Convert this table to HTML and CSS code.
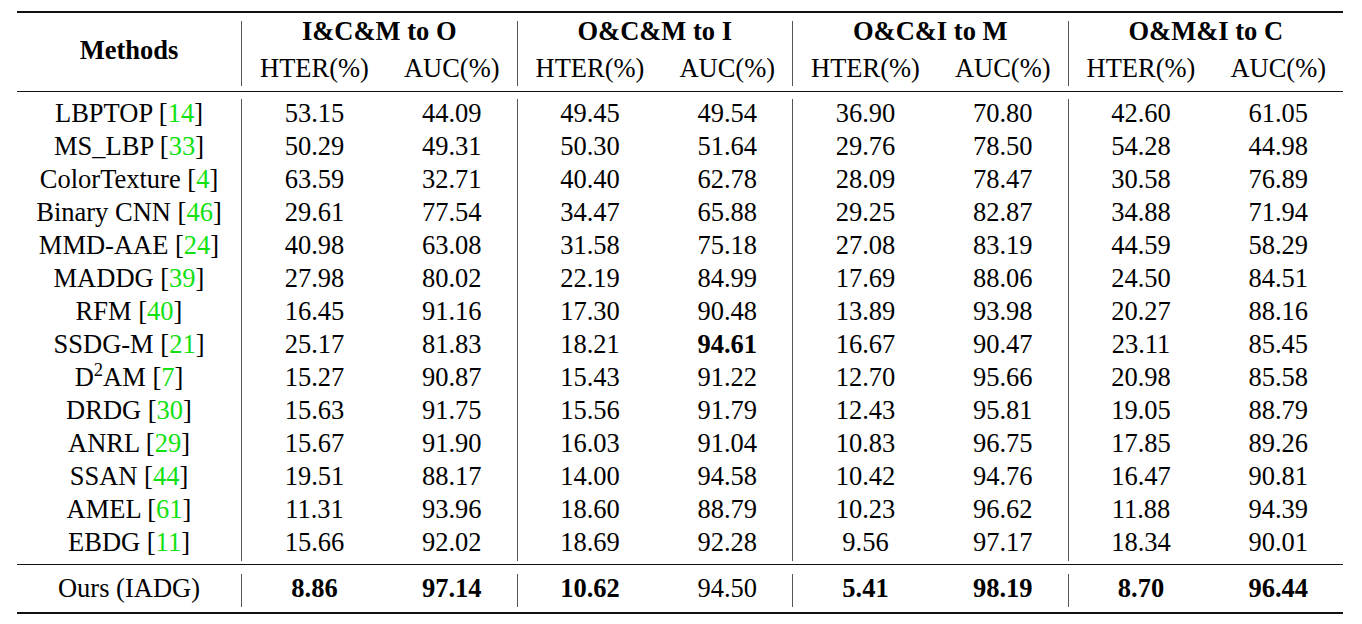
FILE: index.html
```html
<!DOCTYPE html>
<html lang="en">
<head>
<meta charset="utf-8">
<title>Cross-domain results</title>
<link rel="stylesheet" href="styles.css">
</head>
<body>
<div class="page">
<table class="results">
<colgroup>
<col class="c-method">
<col class="c-hter"><col class="c-auc">
<col class="c-hter"><col class="c-auc">
<col class="c-hter"><col class="c-auc">
<col class="c-hter"><col class="c-auc">
</colgroup>
<thead>
<tr class="gap gap-top"><td colspan="9"></td></tr>
<tr class="head-1">
<th rowspan="2" class="methods">Methods</th>
<th colspan="2" class="group vl">I&amp;C&amp;M to O</th>
<th colspan="2" class="group vl">O&amp;C&amp;M to I</th>
<th colspan="2" class="group vl">O&amp;C&amp;I to M</th>
<th colspan="2" class="group vl">O&amp;M&amp;I to C</th>
</tr>
<tr class="head-2">
<th class="vl">HTER(%)</th><th>AUC(%)</th>
<th class="vl">HTER(%)</th><th>AUC(%)</th>
<th class="vl">HTER(%)</th><th>AUC(%)</th>
<th class="vl">HTER(%)</th><th>AUC(%)</th>
</tr>
<tr class="gap gap-mid-a"><td colspan="9"></td></tr>
<tr class="gap gap-mid-b"><td colspan="9"></td></tr>
</thead>
<tbody class="data">
<tr><td>LBPTOP [<span class="cite">14</span>]</td><td class="vl">53.15</td><td>44.09</td><td class="vl">49.45</td><td>49.54</td><td class="vl">36.90</td><td>70.80</td><td class="vl">42.60</td><td>61.05</td></tr>
<tr><td>MS_LBP [<span class="cite">33</span>]</td><td class="vl">50.29</td><td>49.31</td><td class="vl">50.30</td><td>51.64</td><td class="vl">29.76</td><td>78.50</td><td class="vl">54.28</td><td>44.98</td></tr>
<tr><td>ColorTexture [<span class="cite">4</span>]</td><td class="vl">63.59</td><td>32.71</td><td class="vl">40.40</td><td>62.78</td><td class="vl">28.09</td><td>78.47</td><td class="vl">30.58</td><td>76.89</td></tr>
<tr><td>Binary CNN [<span class="cite">46</span>]</td><td class="vl">29.61</td><td>77.54</td><td class="vl">34.47</td><td>65.88</td><td class="vl">29.25</td><td>82.87</td><td class="vl">34.88</td><td>71.94</td></tr>
<tr><td>MMD-AAE [<span class="cite">24</span>]</td><td class="vl">40.98</td><td>63.08</td><td class="vl">31.58</td><td>75.18</td><td class="vl">27.08</td><td>83.19</td><td class="vl">44.59</td><td>58.29</td></tr>
<tr><td>MADDG [<span class="cite">39</span>]</td><td class="vl">27.98</td><td>80.02</td><td class="vl">22.19</td><td>84.99</td><td class="vl">17.69</td><td>88.06</td><td class="vl">24.50</td><td>84.51</td></tr>
<tr><td>RFM [<span class="cite">40</span>]</td><td class="vl">16.45</td><td>91.16</td><td class="vl">17.30</td><td>90.48</td><td class="vl">13.89</td><td>93.98</td><td class="vl">20.27</td><td>88.16</td></tr>
<tr><td>SSDG-M [<span class="cite">21</span>]</td><td class="vl">25.17</td><td>81.83</td><td class="vl">18.21</td><td class="best">94.61</td><td class="vl">16.67</td><td>90.47</td><td class="vl">23.11</td><td>85.45</td></tr>
<tr><td>D<sup>2</sup>AM [<span class="cite">7</span>]</td><td class="vl">15.27</td><td>90.87</td><td class="vl">15.43</td><td>91.22</td><td class="vl">12.70</td><td>95.66</td><td class="vl">20.98</td><td>85.58</td></tr>
<tr><td>DRDG [<span class="cite">30</span>]</td><td class="vl">15.63</td><td>91.75</td><td class="vl">15.56</td><td>91.79</td><td class="vl">12.43</td><td>95.81</td><td class="vl">19.05</td><td>88.79</td></tr>
<tr><td>ANRL [<span class="cite">29</span>]</td><td class="vl">15.67</td><td>91.90</td><td class="vl">16.03</td><td>91.04</td><td class="vl">10.83</td><td>96.75</td><td class="vl">17.85</td><td>89.26</td></tr>
<tr><td>SSAN [<span class="cite">44</span>]</td><td class="vl">19.51</td><td>88.17</td><td class="vl">14.00</td><td>94.58</td><td class="vl">10.42</td><td>94.76</td><td class="vl">16.47</td><td>90.81</td></tr>
<tr><td>AMEL [<span class="cite">61</span>]</td><td class="vl">11.31</td><td>93.96</td><td class="vl">18.60</td><td>88.79</td><td class="vl">10.23</td><td>96.62</td><td class="vl">11.88</td><td>94.39</td></tr>
<tr><td>EBDG [<span class="cite">11</span>]</td><td class="vl">15.66</td><td>92.02</td><td class="vl">18.69</td><td>92.28</td><td class="vl">9.56</td><td>97.17</td><td class="vl">18.34</td><td>90.01</td></tr>
</tbody>
<tbody class="ours">
<tr class="gap gap-ours-a"><td colspan="9"></td></tr>
<tr class="gap gap-ours-b"><td colspan="9"></td></tr>
<tr class="ours-row"><td>Ours (IADG)</td><td class="vl best">8.86</td><td class="best">97.14</td><td class="vl best">10.62</td><td>94.50</td><td class="vl best">5.41</td><td class="best">98.19</td><td class="vl best">8.70</td><td class="best">96.44</td></tr>
<tr class="gap gap-bottom"><td colspan="9"></td></tr>
</tbody>
</table>
</div>
</body>
</html>
```

FILE: styles.css
```css
html, body {
  margin: 0;
  background: #ffffff;
}

body {
  font-family: "Liberation Serif", "Times New Roman", Times, serif;
  color: #000000;
}

.page {
  padding: 11px 0 0 17px;
}

.results {
  border-collapse: separate;
  border-spacing: 0;
  table-layout: fixed;
  width: 1326px;
  font-family: "Liberation Serif", "Times New Roman", Times, serif;
  font-size: 26.5px;
}

.c-method { width: 224px; }
.c-hter { width: 146px; }
.c-auc { width: 129.5px; }

.results th,
.results td {
  padding: 0;
  text-align: center;
  white-space: nowrap;
  font-family: "Liberation Serif", "Times New Roman", Times, serif;
  font-size: 26.5px;
}

.vl {
  border-left: 1px solid #555555;
}

/* spacer rows that carry the booktabs rules */
.results .gap td {
  padding: 0;
  font-size: 0;
  line-height: 0;
}
.gap-top td {
  height: 8px;
  border-top: 2px solid #111111;
}
.gap-mid-a td {
  height: 5px;
  border-bottom: 1px solid #111111;
}
.gap-mid-b td {
  height: 7px;
}
.gap-ours-a td {
  height: 3px;
  border-bottom: 1px solid #111111;
}
.gap-ours-b td {
  height: 9px;
}
.gap-bottom td {
  height: 5px;
  border-bottom: 2px solid #111111;
}

/* header */
.head-1 th {
  height: 30px;
  line-height: 20px;
  vertical-align: top;
  font-weight: bold;
}
.head-1 th.methods {
  line-height: 58px;
  vertical-align: top;
}
.head-2 th {
  height: 35px;
  line-height: 35px;
  font-weight: normal;
}

/* body rows */
.data td,
.ours-row td {
  line-height: 29px;
  padding-bottom: 4px;
  vertical-align: top;
}

.cite {
  color: #11e011;
}

.best {
  font-weight: bold;
}

sup {
  font-size: 0.7em;
  line-height: 0;
  vertical-align: 0.55em;
}
```
